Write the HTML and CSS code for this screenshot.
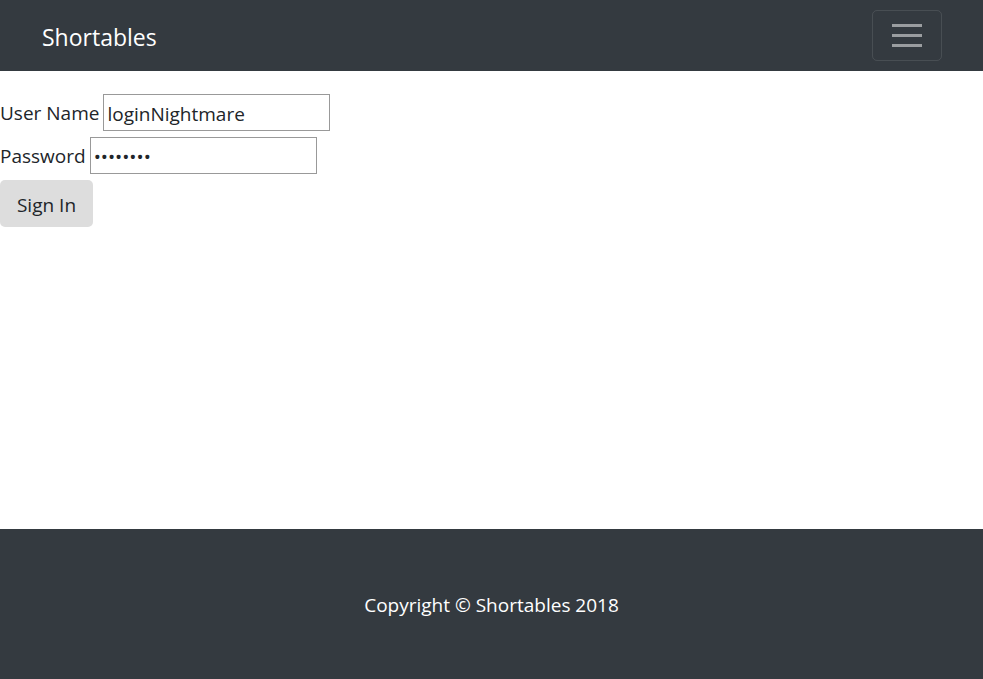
FILE: index.html
```html
<!DOCTYPE html>
<html>
<head>
<meta charset="utf-8">
<link rel="stylesheet" href="styles.css">
</head>
<body>
<nav class="navbar">
  <a class="brand" href="#">Shortables</a>
  <button class="toggler" type="button" aria-label="Toggle navigation">
    <span class="bar"></span><span class="bar"></span><span class="bar"></span>
  </button>
</nav>
<main class="content">
  <form class="login">
    <div class="row"><label>User Name</label> <input class="field" type="text" value="loginNightmare"></div>
    <div class="row"><label>Password</label> <input class="field" type="password" value="password"></div>
    <button class="signin" type="button">Sign In</button>
  </form>
</main>
<footer class="footer">
  <p>Copyright © Shortables 2018</p>
</footer>
</body>
</html>
```

FILE: styles.css
```css
html, body {
  margin: 0;
  padding: 0;
}
body {
  font-family: "Open Sans", "Noto Sans", sans-serif;
  font-size: 19px;
  color: #212529;
  background: #fff;
}
.navbar {
  background: #343a40;
  height: 71px;
  display: flex;
  align-items: center;
  justify-content: space-between;
  padding: 0 41px 0 42px;
  box-sizing: border-box;
}
.brand {
  color: #fff;
  text-decoration: none;
  font-size: 23px;
  line-height: 1;
  margin-top: 3px;
}
.toggler {
  width: 70px;
  height: 51px;
  background: transparent;
  border: 1px solid rgba(255,255,255,.1);
  border-radius: 5px;
  display: flex;
  flex-direction: column;
  align-items: center;
  justify-content: center;
  gap: 7px;
  padding: 0;
}
.bar {
  display: block;
  width: 30px;
  height: 3px;
  background: rgba(255,255,255,.5);
}
.content {
  height: 458px;
  padding-top: 23px;
  box-sizing: border-box;
}
.login {
  display: flex;
  flex-direction: column;
  align-items: flex-start;
  gap: 6px;
}
.row {
  display: flex;
  align-items: center;
  gap: 4px;
  height: 37px;
}
.row label {
  line-height: 35px;
  padding-top: 2px;
}
.field {
  width: 227px;
  height: 37px;
  box-sizing: border-box;
  border: 1px solid #999;
  font-family: inherit;
  font-size: 19px;
  padding: 2px 3px 0;
  color: #212529;
}
.signin {
  height: 47px;
  width: 93px;
  padding: 2px 0 0;
  background: #ddd;
  border: none;
  border-radius: 5px;
  font-family: inherit;
  font-size: 19px;
  color: #212529;
}
.footer {
  background: #343a40;
  height: 150px;
  display: flex;
  align-items: center;
  justify-content: center;
  color: #fff;
}
.footer p {
  margin: 0;
  padding-top: 2px;
}
```
